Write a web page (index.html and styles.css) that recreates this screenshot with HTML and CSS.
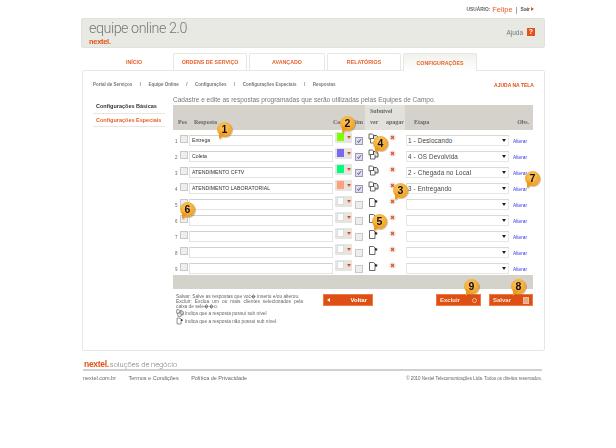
FILE: index.html
```html
<!DOCTYPE html>
<html lang="pt-BR">
<head>
<meta charset="utf-8">
<title>equipe online 2.0</title>
<link rel="stylesheet" href="styles.css">
</head>
<body>
<svg class="defs" width="0" height="0" aria-hidden="true">
  <symbol id="subyes" viewBox="0 0 11 11">
    <path d="M1 1h3.500l1 1v4h-4.500z" fill="#fff" stroke="#444" stroke-width=".8"/>
    <path d="M5.500 2.500h3l1.500 1.500v4h-4.500z" fill="#ddd" stroke="#333" stroke-width=".8"/>
    <path d="M2.500 5.500h3.500l1 1v3.500h-4.500z" fill="#fff" stroke="#444" stroke-width=".8"/>
  </symbol>
  <symbol id="subno" viewBox="0 0 11 11">
    <path d="M1.500 1.500h4l1.500 1.500v6.500h-5.500z" fill="#fff" stroke="#444" stroke-width=".8"/>
    <path d="M8 2.500l.6 1.200 1.300.1-1 .9.3 1.200-1.200-.7-1 .6v-2.300z" fill="#222"/>
  </symbol>
  <symbol id="del" viewBox="0 0 8 8">
    <circle cx="4" cy="4" r="3.500" fill="#eadfd8"/>
    <path d="M2.500 2.500l3 3M5.500 2.500l-3 3" stroke="#e2401a" stroke-width="1.300"/>
  </symbol>
  <symbol id="tick" viewBox="0 0 8 8">
    <path d="M1.800 4.200l1.600 1.800 3-4.200" fill="none" stroke="#33337a" stroke-width="1.100"/>
  </symbol>
</svg>

<div class="page">
  <div class="userbar">
    <span class="userlabel">USUÁRIO:</span>
    <span class="username">Felipe</span>
    <span class="sep">|</span>
    <a class="logout">Sair <i class="logout-arrow"></i></a>
  </div>

  <header class="masthead">
    <div class="brand">
      <div class="apptitle">equipe online 2.0</div>
      <div class="nextel">nextel.</div>
    </div>
    <div class="help">Ajuda <span class="helpicon">?</span></div>
  </header>

  <nav class="tabs">
    <a class="tab tab-home">INÍCIO</a>
    <a class="tab tab-os">ORDENS DE SERVIÇO</a>
    <a class="tab tab-adv">AVANÇADO</a>
    <a class="tab tab-rep">RELATÓRIOS</a>
    <a class="tab tab-conf">CONFIGURAÇÕES</a>
  </nav>

  <main class="panel">
    <div class="crumbs">
      <div class="crumblist">
        <span>Portal de Serviços</span><span>/</span><span>Equipe Online</span><span>/</span><span>Configurações</span><span>/</span><span>Configurações Especiais</span><span>/</span><span>Respostas</span>
      </div>
      <a class="screenhelp">AJUDA NA TELA</a>
    </div>

    <div class="columns">
      <aside class="sidemenu">
        <a class="sideitem sideitem-dark">Configurações Básicas</a>
        <a class="sideitem sideitem-orange">Configurações Especiais</a>
      </aside>

      <section class="content">
        <p class="lead">Cadastre e edite as respostas programadas que serão utilizadas pelas Equipes de Campo.</p>

        <div class="thead">
          <div class="th th-pos">Pos</div>
          <div class="th th-resp">Resposta</div>
          <div class="th th-cor">Cor</div>
          <div class="th th-sim">Sim</div>
          <div class="th-sub">
            <div class="th-subtitle">Subnível</div>
            <div class="th-subcols"><span>ver</span><span>apagar</span></div>
          </div>
          <div class="th th-etapa">Etapa</div>
          <div class="th th-obs">Obs.</div>
        </div>

        <div class="rows">
          <div class="row">
            <span class="num">1</span><span class="check"></span>
            <input class="text" value="Entrega">
            <span class="colorpick"><i class="swatch c-green"></i><i class="caret"></i></span>
            <span class="check check-on"><svg><use href="#tick"/></svg></span>
            <svg class="subicon"><use href="#subyes"/></svg>
            <svg class="delicon"><use href="#del"/></svg>
            <span class="select">1 - Deslocando</span>
            <a class="alter">Alterar</a>
          </div>
          <div class="row">
            <span class="num">2</span><span class="check"></span>
            <input class="text" value="Coleta">
            <span class="colorpick"><i class="swatch c-violet"></i><i class="caret"></i></span>
            <span class="check check-on"><svg><use href="#tick"/></svg></span>
            <svg class="subicon"><use href="#subyes"/></svg>
            <svg class="delicon"><use href="#del"/></svg>
            <span class="select">4 - OS Devolvida</span>
            <a class="alter">Alterar</a>
          </div>
          <div class="row">
            <span class="num">3</span><span class="check"></span>
            <input class="text" value="ATENDIMENTO CFTV">
            <span class="colorpick"><i class="swatch c-mint"></i><i class="caret"></i></span>
            <span class="check check-on"><svg><use href="#tick"/></svg></span>
            <svg class="subicon"><use href="#subyes"/></svg>
            <svg class="delicon"><use href="#del"/></svg>
            <span class="select">2 - Chegada no Local</span>
            <a class="alter">Alterar</a>
          </div>
          <div class="row">
            <span class="num">4</span><span class="check"></span>
            <input class="text" value="ATENDIMENTO LABORATORIAL">
            <span class="colorpick"><i class="swatch c-salmon"></i><i class="caret"></i></span>
            <span class="check check-on"><svg><use href="#tick"/></svg></span>
            <svg class="subicon"><use href="#subyes"/></svg>
            <svg class="delicon"><use href="#del"/></svg>
            <span class="select">3 - Entregando</span>
            <a class="alter">Alterar</a>
          </div>
          <div class="row">
            <span class="num">5</span><span class="check"></span>
            <input class="text" value="">
            <span class="colorpick"><i class="swatch"></i><i class="caret"></i></span>
            <span class="check"></span>
            <svg class="subicon"><use href="#subno"/></svg>
            <svg class="delicon"><use href="#del"/></svg>
            <span class="select"></span>
            <a class="alter">Alterar</a>
          </div>
          <div class="row">
            <span class="num">6</span><span class="check"></span>
            <input class="text" value="">
            <span class="colorpick"><i class="swatch"></i><i class="caret"></i></span>
            <span class="check"></span>
            <svg class="subicon"><use href="#subno"/></svg>
            <svg class="delicon"><use href="#del"/></svg>
            <span class="select"></span>
            <a class="alter">Alterar</a>
          </div>
          <div class="row">
            <span class="num">7</span><span class="check"></span>
            <input class="text" value="">
            <span class="colorpick"><i class="swatch"></i><i class="caret"></i></span>
            <span class="check"></span>
            <svg class="subicon"><use href="#subno"/></svg>
            <svg class="delicon"><use href="#del"/></svg>
            <span class="select"></span>
            <a class="alter">Alterar</a>
          </div>
          <div class="row">
            <span class="num">8</span><span class="check"></span>
            <input class="text" value="">
            <span class="colorpick"><i class="swatch"></i><i class="caret"></i></span>
            <span class="check"></span>
            <svg class="subicon"><use href="#subno"/></svg>
            <svg class="delicon"><use href="#del"/></svg>
            <span class="select"></span>
            <a class="alter">Alterar</a>
          </div>
          <div class="row">
            <span class="num">9</span><span class="check"></span>
            <input class="text" value="">
            <span class="colorpick"><i class="swatch"></i><i class="caret"></i></span>
            <span class="check"></span>
            <svg class="subicon"><use href="#subno"/></svg>
            <svg class="delicon"><use href="#del"/></svg>
            <span class="select"></span>
            <a class="alter">Alterar</a>
          </div>
        </div>

        <div class="tfoot"></div>

        <div class="actions">
          <div class="notes">
            <p class="justified">Salvar: Salve as respostas que voc� inseriu e/ou alterou.<br>Excluir: Exclua um ou mais clientes selecionados pela caixa de sele��o.</p>
            <p class="legend"><svg class="legendicon"><use href="#subyes"/></svg>Indica que a resposta possui sub nível</p>
            <p class="legend"><svg class="legendicon"><use href="#subno"/></svg>Indica que a resposta não possui sub nível.</p>
          </div>
          <a class="btn btn-back"><i class="btn-arrow"></i><span>Voltar</span></a>
          <a class="btn btn-del"><span>Excluir</span><i class="btn-ring"></i></a>
          <a class="btn btn-save"><span>Salvar</span><i class="btn-disk"></i></a>
        </div>
      </section>
    </div>
  </main>

  <footer class="footer">
    <div class="footbrand"><span class="nextel nextel-foot">nextel.</span> <span class="slogan">soluções de negócio</span></div>
    <div class="footlinks">
      <div class="footnav"><a>nextel.com.br</a><a>Termos e Condições</a><a>Política de Privacidade</a></div>
      <div class="copyright">© 2010 Nextel Telecomunicações Ltda. Todos os direitos reservados.</div>
    </div>
  </footer>
</div>

<span class="pin pin-1">1</span>
<span class="pin pin-2">2</span>
<span class="pin pin-3">3</span>
<span class="pin pin-4">4</span>
<span class="pin pin-5">5</span>
<span class="pin pin-6">6</span>
<span class="pin pin-7">7</span>
<span class="pin pin-8">8</span>
<span class="pin pin-9">9</span>
</body>
</html>
```

FILE: styles.css
```css
* { box-sizing: border-box; }
html, body { margin: 0; padding: 0; }
body {
  width: 616px;
  height: 448px;
  position: relative;
  overflow: hidden;
  background: #fff;
  font-family: "Liberation Sans", Arial, sans-serif;
  color: #555;
  filter: blur(.3px);
}
p { margin: 0; }
a { cursor: pointer; }
.defs { position: absolute; }

.page { width: 464px; margin-left: 81px; }

.userbar {
  height: 18px;
  display: flex;
  justify-content: flex-end;
  align-items: center;
  gap: 3px;
  padding: 0 11px 0 0;
  font-size: 5px;
}
.userlabel { color: #666; font-weight: bold; letter-spacing: 0; font-size: 4.800px; }
.username { color: #e8622c; font-size: 7.500px; margin-left: -1px; }
.sep { color: #666; font-size: 7px; }
.logout { color: #555; font-weight: bold; display: flex; align-items: center; gap: 1px; }
.logout-arrow {
  width: 0; height: 0;
  border-left: 3px solid #e2521a;
  border-top: 2px solid transparent;
  border-bottom: 2px solid transparent;
}

.masthead {
  height: 30px;
  background: #e9e9e3;
  border-radius: 2px;
  border: 1px solid #e2e2dc;
  display: flex;
  justify-content: space-between;
  align-items: center;
  padding: 0 9px 0 7px;
}
.brand { margin-top: .5px; }
.apptitle { font-family: Roboto, "Liberation Sans", sans-serif; font-weight: 300; font-size: 14.300px; line-height: 13px; margin-bottom: 3.500px; color: #777; letter-spacing: -.45px; }
.nextel { font-size: 7.500px; line-height: 7px; font-weight: bold; color: #e2521a; letter-spacing: -.3px; }
.help { display: flex; align-items: center; gap: 4px; font-size: 6.500px; color: #777; margin-top: -2px; }
.helpicon {
  width: 8px; height: 8px;
  background: #e2521a;
  color: #fff;
  font-size: 7px;
  font-weight: bold;
  line-height: 8px;
  text-align: center;
}

.tabs { display: flex; height: 17px; margin-top: 5px; gap: 2px; }
.tab {
  display: flex;
  align-items: center;
  justify-content: center;
  font-size: 5.300px;
  font-weight: bold;
  color: #e8622c;
  border: 1px solid #e8e8e2;
  border-bottom: 0;
  border-radius: 2px 2px 0 0;
  background: #fff;
}
.tab-home { width: 90px; padding-left: 16px; border-color: transparent; }
.tab-os { width: 74px; }
.tab-adv { width: 76px; }
.tab-rep { width: 74px; }
.tab-conf {
  width: 74px;
  height: 18px;
  position: relative;
  z-index: 1;
  background: linear-gradient(#f1f1ec, #fff);
}

.panel {
  height: 281px;
  border: 1px solid #e8e8e2;
  border-radius: 2px;
  padding: 9px 10px 0 10px;
  margin-left: 1px;
  width: 463px;
}
.crumbs { display: flex; justify-content: space-between; align-items: center; height: 9px; }
.crumblist { display: flex; gap: 7.500px; font-size: 4.500px; font-weight: bold; color: #777; }
.screenhelp { font-size: 5px; font-weight: bold; color: #e2521a; }

.columns { display: flex; gap: 8px; margin-top: 7px; }
.sidemenu { width: 72px; padding-top: 4px; flex: none; }
.sideitem {
  display: block;
  height: 13.500px;
  line-height: 13px;
  font-size: 5.500px;
  font-weight: bold;
  padding-left: 3px;
  border-bottom: 1px solid #e8e8e2;
}
.sideitem-dark { color: #333; }
.sideitem-orange { color: #e8622c; }

.content { width: 361px; flex: none; }
.lead { font-size: 6.500px; line-height: 8px; color: #777; white-space: nowrap; margin-bottom: 1px; }

.thead {
  height: 25px;
  width: 360px;
  background: #d5d1cb;
  display: grid;
  grid-template-columns: 21px 139px 19px 13px 40px 110px 1fr;
  align-items: end;
  font-family: "Liberation Serif", serif;
  font-weight: bold;
  font-size: 6px;
  color: #666;
}
.th { padding: 0 0 5px 0; }
.th-pos { padding-left: 5px; }
.th-sim { text-align: right; padding-right: 2px; }
.th-sub {
  background: #e3e2da;
  height: 25px;
  padding: 3px 0 5px;
  display: flex;
  flex-direction: column;
  justify-content: space-between;
}
.th-subtitle { padding-left: 5px; }
.th-subcols { display: flex; justify-content: space-between; padding: 0 1px 0 5px; }
.th-etapa { padding-left: 9px; }
.th-obs { text-align: right; padding-right: 4px; }

.rows { padding-top: 2px; }
.row {
  height: 16px;
  display: grid;
  grid-template-columns: 7px 9px 144px 2px 17px 3px 8px 5px 11px 10px 6px 11px 103px 4px 1fr;
  grid-template-areas: "n c t . p . k . s . d . e . a";
  align-items: center;
}
.num { grid-area: n; font-size: 4.500px; color: #666; padding-left: 2px; margin-top: 2px; }
.row > .check { grid-area: c; margin-top: -2px; }
.text {
  grid-area: t;
  width: 144px;
  height: 11px;
  padding: 0 2px;
  border: 1px solid #e4e4e0;
  border-top: 1px solid #d2d2cd;
  background: #fff;
  font-family: "Liberation Sans", Arial, sans-serif;
  font-size: 5.200px;
  color: #333;
  outline: 0;
}
.check {
  width: 8px; height: 8px;
  background: #eeeeee;
  border: 1px solid #c8c8c8;
  display: block;
}
.check svg { display: block; width: 6px; height: 6px; }
.row > .check ~ .check { grid-area: k; margin-top: 1px; }
.check-on { background: #dcdcea; border-color: #9a9ab4; }
.colorpick {
  grid-area: p;
  width: 17px; height: 11px;
  margin-top: -6px;
  background: #e4e4e0;
  border: 1px solid #e4e4e0;
  border-radius: 1px;
  display: flex;
  align-items: center;
  gap: 3px;
  padding-left: 1px;
}
.swatch { width: 8px; height: 8px; background: #fff; border: 1px solid #ddd; display: block; }
.c-green { background: #7fff00; border-color: #7fff00; }
.c-violet { background: #7b68ee; border-color: #7b68ee; }
.c-mint { background: #00ff7f; border-color: #00ff7f; }
.c-salmon { background: #ffa07a; border-color: #ffa07a; }
.caret {
  width: 0; height: 0;
  border-top: 3px solid #e2521a;
  border-left: 2px solid transparent;
  border-right: 2px solid transparent;
}
.subicon { grid-area: s; width: 11px; height: 11px; display: block; margin-top: -4px; }
.delicon { grid-area: d; width: 7px; height: 7px; display: block; margin-top: -6px; }
.select {
  grid-area: e;
  height: 11px;
  line-height: 9px;
  padding-left: 1px;
  border: 1px solid #e6e6e2;
  border-top-color: #dadad5;
  background: #fff;
  font-size: 6.300px;
  color: #444;
  letter-spacing: .15px;
  position: relative;
}
.select::after {
  content: "";
  position: absolute;
  right: 2px; top: 3px;
  border-top: 3px solid #222;
  border-left: 2.500px solid transparent;
  border-right: 2.500px solid transparent;
}
.alter { grid-area: a; font-size: 4.800px; color: #3a3ae0; margin-top: 2px; }

.tfoot { height: 14px; width: 360px; background: #d5d1cb; margin-top: -1px; }

.actions { display: flex; align-items: flex-start; margin-top: 5px; position: relative; }
.notes { width: 130px; font-size: 4.800px; line-height: 5px; color: #666; padding-left: 3px; flex: none; }
.justified { text-align: justify; }
.legend { display: flex; align-items: center; height: 8px; gap: 1px; white-space: nowrap; }
.legendicon { width: 8px; height: 8px; flex: none; }
.btn {
  height: 12px;
  background: #dd4f12;
  border: 1px solid #ef7a45;
  color: #fff;
  font-size: 6px;
  font-weight: bold;
  display: flex;
  align-items: center;
  flex: none;
}
.btn-back { width: 50px; margin-left: 20px; padding: 0 5px 0 3px; justify-content: space-between; }
.btn-del { width: 45px; margin-left: 63px; padding: 0 3px; justify-content: space-between; color: #fbe6da; }
.btn-save { width: 44px; margin-left: 8px; padding: 0 3px; justify-content: space-between; color: #fbe6da; }
.btn-arrow {
  width: 0; height: 0;
  border-right: 3px solid #fff;
  border-top: 2.500px solid transparent;
  border-bottom: 2.500px solid transparent;
}
.btn-ring { width: 5px; height: 5px; border: 1px solid #f3b596; border-radius: 50%; }
.btn-disk { width: 6px; height: 7px; background: #f0a681; border: 1px solid #f3c0a6; }

.footer { margin-top: 9px; }
.footbrand { height: 9px; display: flex; align-items: baseline; gap: 1px; padding-left: 3px; line-height: 9px; }
.nextel-foot { font-size: 8.500px; line-height: 9px; }
.slogan { font-family: Roboto, "Liberation Sans", sans-serif; font-weight: 300; color: #777; font-size: 7.500px; }
.footlinks {
  border-top: 2px solid #d0d0d0;
  margin: 0 0 0 2px;
  padding-top: 4px;
  display: flex;
  justify-content: space-between;
  align-items: center;
  font-size: 5.500px;
  color: #666;
  width: 459px;
}
.footnav { display: flex; gap: 12.500px; }
.copyright { font-size: 4.450px; }

.pin {
  position: absolute;
  width: 15px; height: 15px;
  border-radius: 50%;
  background: radial-gradient(circle at 45% 35%, #fdc860, #ef9a1e 85%);
  filter: drop-shadow(1px 1px .5px rgba(120,80,0,.35));
  color: #111;
  font-size: 10.500px;
  font-weight: bold;
  line-height: 15px;
  text-align: center;
}
.pin::after {
  content: "";
  position: absolute;
  left: 1.500px; top: 10px;
  width: 6px; height: 7.500px;
  background: #ee981c;
  clip-path: polygon(0 0, 100% 30%, 0 100%);
}
.pin-1 { left: 217px; top: 122px; }
.pin-2 { left: 340px; top: 116px; }
.pin-3 { left: 393px; top: 183px; }
.pin-4 { left: 373px; top: 136px; }
.pin-5 { left: 372px; top: 214px; }
.pin-6 { left: 180px; top: 202px; }
.pin-7 { left: 525px; top: 171px; }
.pin-8 { left: 511px; top: 279px; }
.pin-9 { left: 464px; top: 279px; }
```
